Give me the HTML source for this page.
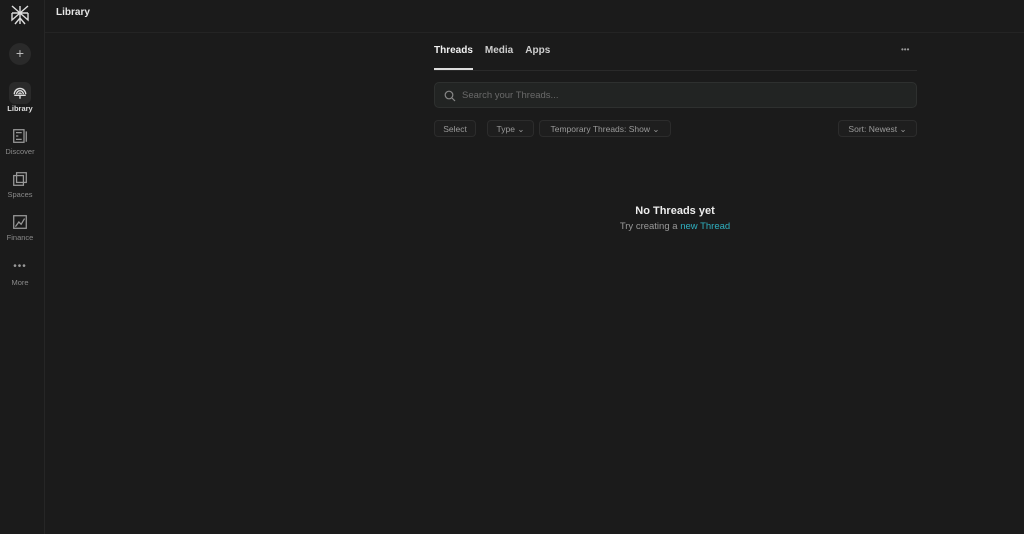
<!DOCTYPE html>
<html><head><style>
*{box-sizing:border-box;margin:0;padding:0}
body{width:1024px;height:534px;background:#1b1b1b;font-family:"Liberation Sans",sans-serif;color:#e8e8e8;position:relative;overflow:hidden}
.side{position:absolute;left:0;top:0;width:45px;height:534px;background:#1b1b1b;border-right:1px solid #262626}
.top{position:absolute;left:45px;top:0;right:0;height:33px;border-bottom:1px solid #242424}
.top span{position:absolute;left:11px;top:7px;font-size:10px;font-weight:bold;color:#e6e6e6}
.nav{position:absolute;left:0;width:40px;text-align:center;font-size:7.5px;color:#8a8a8a}
.nav svg{display:block;margin:0 auto 3px}
.tabs{position:absolute;left:434px;top:45px;font-size:10px;font-weight:bold}
.tabs span{margin-right:12px;color:#cfcfcf}
.tabline{position:absolute;left:434px;top:70px;width:483px;height:1px;background:#2a2a2a}
.ul{position:absolute;left:434px;top:68px;width:39px;height:2px;background:#ddd}
.search{position:absolute;left:434px;top:82px;width:483px;height:26px;background:#222423;border:1px solid #2e302f;border-radius:5px}
.search span{position:absolute;left:27px;top:7px;font-size:9.5px;color:#6a6a6a}
.btn{position:absolute;top:120px;height:17px;border:1px solid #2c2c2c;border-radius:4px;font-size:8.5px;color:#9a9a9a;padding-top:3px;text-align:center;background:#1e1e1e;white-space:nowrap}
</style></head><body>
<div class="side">
<svg style="position:absolute;left:9px;top:4px" width="22" height="22" viewBox="0 0 22 22" fill="none" stroke="#ddd" stroke-width="1.4"><path d="M3 2l8 7 8-7M11 2v18M3 9h16M3 9v7l8-7 8 7V9M3 16l8-7M6 20l5-6 5 6"/></svg>
<div style="position:absolute;left:9px;top:43px;width:22px;height:22px;border-radius:50%;background:#2a2a2a;color:#bbb;font-size:14px;text-align:center;line-height:21px">+</div>
<div style="position:absolute;left:9px;top:82px;width:22px;height:22px;border-radius:6px;background:#2a2a2a"></div>
<div class="nav" style="top:85px;color:#ddd;font-weight:bold"><svg width="16" height="16" viewBox="0 0 14 14" fill="none" stroke="#ddd" stroke-width="1.2"><path d="M2 8a5 5 0 0110 0M4 8a3 3 0 016 0M6 8a1 1 0 012 0M2 9h10M7 9v3"/></svg>Library</div>
<div class="nav" style="top:128px"><svg width="16" height="16" viewBox="0 0 14 14" fill="none" stroke="#999" stroke-width="1.1"><rect x="1.5" y="1.5" width="9" height="11"/><path d="M12.5 3v9M3.5 4h5M3.5 7h2M3.5 10h5"/></svg>Discover</div>
<div class="nav" style="top:171px"><svg width="16" height="16" viewBox="0 0 14 14" fill="none" stroke="#999" stroke-width="1.1"><rect x="4" y="1.5" width="8.5" height="8.5"/><rect x="1.5" y="4" width="8.5" height="8.5"/></svg>Spaces</div>
<div class="nav" style="top:214px"><svg width="16" height="16" viewBox="0 0 14 14" fill="none" stroke="#999" stroke-width="1.1"><rect x="1.5" y="1.5" width="11" height="11"/><path d="M3 11l3-4 2 2 3-5"/></svg>Finance</div>
<div class="nav" style="top:261px"><div style="font-size:10px;letter-spacing:1px;color:#999;margin-bottom:6px">•••</div>More</div>
</div>
<div class="top"><span>Library</span></div>
<div class="tabs"><span style="color:#f2f2f2">Threads</span><span>Media</span><span>Apps</span></div>
<div style="position:absolute;left:901px;top:45px;font-size:8px;color:#999">•••</div>
<div class="tabline"></div><div class="ul"></div>
<div class="search"><svg style="position:absolute;left:9px;top:7px" width="12" height="12" viewBox="0 0 12 12" fill="none" stroke="#888" stroke-width="1.2"><circle cx="5" cy="5" r="3.8"/><path d="M8 8l3 3"/></svg><span>Search your Threads...</span></div>
<div class="btn" style="left:434px;width:42px">Select</div>
<div class="btn" style="left:487px;width:47px">Type ⌄</div>
<div class="btn" style="left:539px;width:132px">Temporary Threads: Show ⌄</div>
<div class="btn" style="left:838px;width:79px">Sort: Newest ⌄</div>
<div style="position:absolute;left:0;width:1350px;top:205px;text-align:center;font-size:11px;font-weight:bold;color:#eee">No Threads yet</div>
<div style="position:absolute;left:0;width:1350px;top:221px;text-align:center;font-size:9.5px;color:#999">Try creating a <span style="color:#2fb0c0">new Thread</span></div>
</body></html>
